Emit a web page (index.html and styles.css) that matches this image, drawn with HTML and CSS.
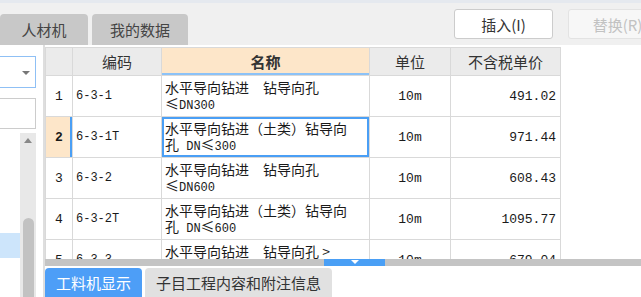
FILE: index.html
```html
<!DOCTYPE html>
<html lang="zh">
<head>
    <meta charset="UTF-8">
    <meta name="viewport" content="width=device-width, initial-scale=1.0">
    <title>定额查询</title>
    <link rel="stylesheet" href="styles.css">
</head>
<body>
    <div class="top-bar">
        <div class="tabs">
            <div class="tab">人材机</div>
            <div class="tab tab-wide">我的数据</div>
        </div>
        <div class="actions">
            <button class="btn">插入(I)</button>
            <button class="btn" disabled>替换(R)</button>
        </div>
    </div>

    <div class="main">
        <div class="side">
            <div class="select"><span class="caret"></span></div>
            <div class="search"></div>
            <div class="side-list">
                <div class="list">
                    <div class="list-item active"></div>
                </div>
                <div class="vscroll">
                    <span class="arrow-up"></span>
                    <div class="vthumb"></div>
                </div>
            </div>
        </div>

        <div class="content">
            <div class="grid-wrap">
                <table class="grid">
                    <colgroup>
                        <col class="c-no">
                        <col class="c-code">
                        <col class="c-name">
                        <col class="c-unit">
                        <col class="c-price">
                    </colgroup>
                    <thead>
                        <tr>
                            <th></th>
                            <th>编码</th>
                            <th class="col-active">名称</th>
                            <th>单位</th>
                            <th>不含税单价</th>
                        </tr>
                    </thead>
                    <tbody>
                        <tr>
                            <td class="no">1</td>
                            <td class="code">6-3-1</td>
                            <td class="name">水平导向钻进　钻导向孔<br>≤<span class="lat">DN300</span></td>
                            <td class="unit">10m</td>
                            <td class="price">491.02</td>
                        </tr>
                        <tr class="current">
                            <td class="no">2</td>
                            <td class="code">6-3-1T</td>
                            <td class="name selected">水平导向钻进（土类）钻导向<br>孔<span class="lat"> DN</span>≤<span class="lat">300</span></td>
                            <td class="unit">10m</td>
                            <td class="price">971.44</td>
                        </tr>
                        <tr>
                            <td class="no">3</td>
                            <td class="code">6-3-2</td>
                            <td class="name">水平导向钻进　钻导向孔<br>≤<span class="lat">DN600</span></td>
                            <td class="unit">10m</td>
                            <td class="price">608.43</td>
                        </tr>
                        <tr>
                            <td class="no">4</td>
                            <td class="code">6-3-2T</td>
                            <td class="name">水平导向钻进（土类）钻导向<br>孔<span class="lat"> DN</span>≤<span class="lat">600</span></td>
                            <td class="unit">10m</td>
                            <td class="price">1095.77</td>
                        </tr>
                        <tr>
                            <td class="no">5</td>
                            <td class="code">6-3-3</td>
                            <td class="name">水平导向钻进　钻导向孔 &gt;<br><span class="lat">DN600</span></td>
                            <td class="unit">10m</td>
                            <td class="price">679.04</td>
                        </tr>
                    </tbody>
                </table>
            </div>
            <div class="hscroll">
                <div class="hthumb"><span class="arrow-down"></span></div>
            </div>
            <div class="bottom-tabs">
                <div class="btab active">工料机显示</div>
                <div class="btab">子目工程内容和附注信息</div>
            </div>
        </div>
    </div>
</body>
</html>
```

FILE: styles.css
```css
:root {
    --bar-bg: #f0f0f0;
    --tab-bg: #c8c8c8;
    --line: #d9d9d9;
    --head-bg: #ebebeb;
    --peach: #fde6c9;
    --blue: #4a9ff5;
    --text: #333333;
}

body {
    margin: 0;
    width: 641px;
    height: 297px;
    overflow: hidden;
    background: #ffffff;
    font-family: "Noto Sans CJK SC", sans-serif;
    color: var(--text);
}

.top-bar {
    box-sizing: border-box;
    height: 45px;
    border-top: 3px solid #e5e9ef;
    background: var(--bar-bg);
    display: flex;
    align-items: flex-start;
}

.tabs {
    align-self: flex-end;
    display: flex;
    gap: 4px;
}

.tab {
    width: 88px;
    height: 31px;
    line-height: 31px;
    text-align: center;
    font-size: 15px;
    color: #444;
    background: var(--tab-bg);
    border-radius: 4px 4px 0 0;
}

.tab-wide {
    width: 96px;
}

.actions {
    margin-top: 6px;
    margin-left: auto;
    margin-right: -26px;
    display: flex;
    gap: 15px;
}

.btn {
    width: 99px;
    height: 30px;
    padding: 0;
    border: 1px solid #cccccc;
    border-radius: 3px;
    background: #ffffff;
    font-family: inherit;
    font-size: 15px;
    color: #333;
}

.btn:disabled {
    border-color: #e3e3e3;
    background: #f7f7f7;
    color: #c2c2c2;
}

.main {
    display: flex;
    height: 252px;
}

/* 左侧分类面板 */
.side {
    box-sizing: border-box;
    width: 45px;
    padding-top: 11px;
    border-right: 2px solid #dedede;
    display: flex;
    flex-direction: column;
}

.select {
    box-sizing: border-box;
    width: 36px;
    height: 32px;
    border: 1px solid #8fc0f5;
    border-left: none;
    position: relative;
}

.caret {
    position: absolute;
    left: 22px;
    top: 14px;
    border-left: 4px solid transparent;
    border-right: 4px solid transparent;
    border-top: 4px solid #777;
}

.search {
    box-sizing: border-box;
    width: 36px;
    height: 31px;
    margin-top: 10px;
    border: 1px solid #cccccc;
    border-left: none;
}

.side-list {
    flex: 1;
    margin-top: 4px;
    display: flex;
}

.list {
    width: 20px;
}

.list-item {
    height: 25px;
}

.list-item.active {
    margin-top: 100px;
    background: #cde5fb;
}

.vscroll {
    width: 16px;
    background: #e8e8e8;
    display: flex;
    flex-direction: column;
    align-items: center;
}

.arrow-up {
    margin-top: 5px;
    border-left: 4px solid transparent;
    border-right: 4px solid transparent;
    border-bottom: 5px solid #888;
}

.vthumb {
    width: 11px;
    flex: 1;
    margin-top: 75px;
    background: #c2c2c2;
    border-radius: 6px 6px 0 0;
}

/* 右侧定额表 */
.content {
    flex: 1;
    display: flex;
    flex-direction: column;
    min-width: 0;
}

.grid-wrap {
    box-sizing: border-box;
    height: 214px;
    padding-top: 2px;
    overflow: hidden;
}

.grid {
    border-collapse: collapse;
    table-layout: fixed;
    width: 515px;
    color: #1a1a1a;
}

.c-no { width: 27px; }
.c-code { width: 89px; }
.c-name { width: 208px; }
.c-unit { width: 81px; }
.c-price { width: 110px; }

.grid th,
.grid td {
    border: 1px solid var(--line);
    padding: 0;
    overflow: hidden;
    white-space: nowrap;
}

.grid th {
    height: 27px;
    background: var(--head-bg);
    font-size: 15px;
    font-weight: normal;
    color: #333;
}

.grid th.col-active {
    background: var(--peach);
    font-weight: bold;
    box-shadow: inset 0 -2px 0 #8cc2f7;
}

.grid tbody tr {
    height: 41px;
}

.grid td {
    vertical-align: middle;
}

.no {
    text-align: center;
    font-family: "Liberation Mono", monospace;
    font-size: 13px;
}

.code {
    padding-left: 3px !important;
    font-family: "Liberation Mono", monospace;
    font-size: 12px;
}

.name {
    padding-left: 3px !important;
    font-size: 14px;
    line-height: 16px;
}

.lat {
    font-family: "Liberation Mono", monospace;
    font-size: 12px;
}

.unit {
    text-align: center;
    font-family: "Liberation Mono", monospace;
    font-size: 13px;
}

.price {
    text-align: right;
    padding-right: 4px !important;
    font-family: "Liberation Mono", monospace;
    font-size: 13px;
}

.current .no {
    background: var(--peach);
    font-weight: bold;
    box-shadow: inset -2px 0 0 var(--blue);
}

.name.selected {
    box-shadow: inset 0 0 0 2px var(--blue);
}

.hscroll {
    height: 7px;
    background: #c4c4c4;
}

.hthumb {
    width: 61px;
    height: 7px;
    margin-left: 279px;
    background: var(--blue);
    display: flex;
    justify-content: center;
}

.arrow-down {
    margin-top: 1px;
    border-left: 4px solid transparent;
    border-right: 4px solid transparent;
    border-top: 4px solid #ffffff;
}

.bottom-tabs {
    margin-top: 2px;
    display: flex;
    gap: 3px;
}

.btab {
    height: 29px;
    line-height: 29px;
    padding: 0 11px;
    font-size: 15px;
    color: #333;
    background: #e1e1e1;
    border-radius: 4px 4px 0 0;
}

.btab.active {
    background: #4d9ef7;
    color: #ffffff;
}
```
